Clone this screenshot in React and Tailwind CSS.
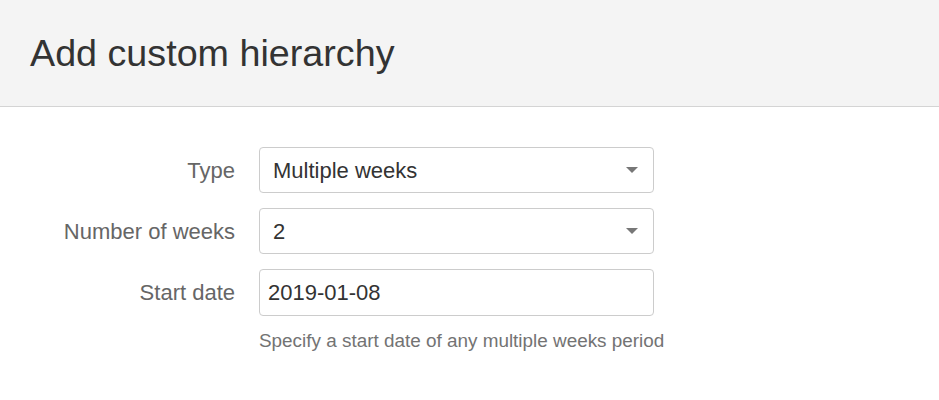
import React from 'react';

function Caret() {
  return (
    <svg className="w-[12px] h-[6px]" viewBox="0 0 12 6" fill="#777">
      <path d="M0 0h12L6 6z" />
    </svg>
  );
}

export default function App() {
  const font = { fontFamily: '"Liberation Sans", Arial, sans-serif' };
  return (
    <div className="w-[939px] h-[400px] bg-white" style={font}>
      {/* Header */}
      <div className="h-[107px] bg-[#f4f4f4] border-b border-[#d4d4d4] flex items-center pl-[30px]">
        <h1 className="text-[37.7px] leading-none text-[#333] pt-[1px]">Add custom hierarchy</h1>
      </div>

      {/* Form */}
      <div className="pt-[40px] flex flex-col gap-[15px]">
        <div className="flex items-center">
          <label className="w-[235px] text-right text-[22px] text-[#666]">Type</label>
          <div className="ml-[24px] w-[395px] h-[46px] border border-[#ccc] rounded-[4px] flex items-center justify-between pl-[13px] pr-[15px] text-[22px] text-[#333]">
            <span>Multiple weeks</span>
            <Caret />
          </div>
        </div>
        <div className="flex items-center">
          <label className="w-[235px] text-right text-[22px] text-[#666]">Number of weeks</label>
          <div className="ml-[24px] w-[395px] h-[46px] border border-[#ccc] rounded-[4px] flex items-center justify-between pl-[13px] pr-[15px] text-[22px] text-[#333]">
            <span>2</span>
            <Caret />
          </div>
        </div>
        <div className="flex items-start">
          <label className="w-[235px] h-[47px] flex items-center justify-end text-[22px] text-[#666]">Start date</label>
          <div className="ml-[24px] w-[395px]">
            <div className="h-[47px] border border-[#ccc] rounded-[4px] flex items-center pl-[8px] text-[22px] text-[#333]">
              2019-01-08
            </div>
            <p className="mt-[11px] text-[18.9px] text-[#737373] whitespace-nowrap">Specify a start date of any multiple weeks period</p>
          </div>
        </div>
      </div>
    </div>
  );
}
